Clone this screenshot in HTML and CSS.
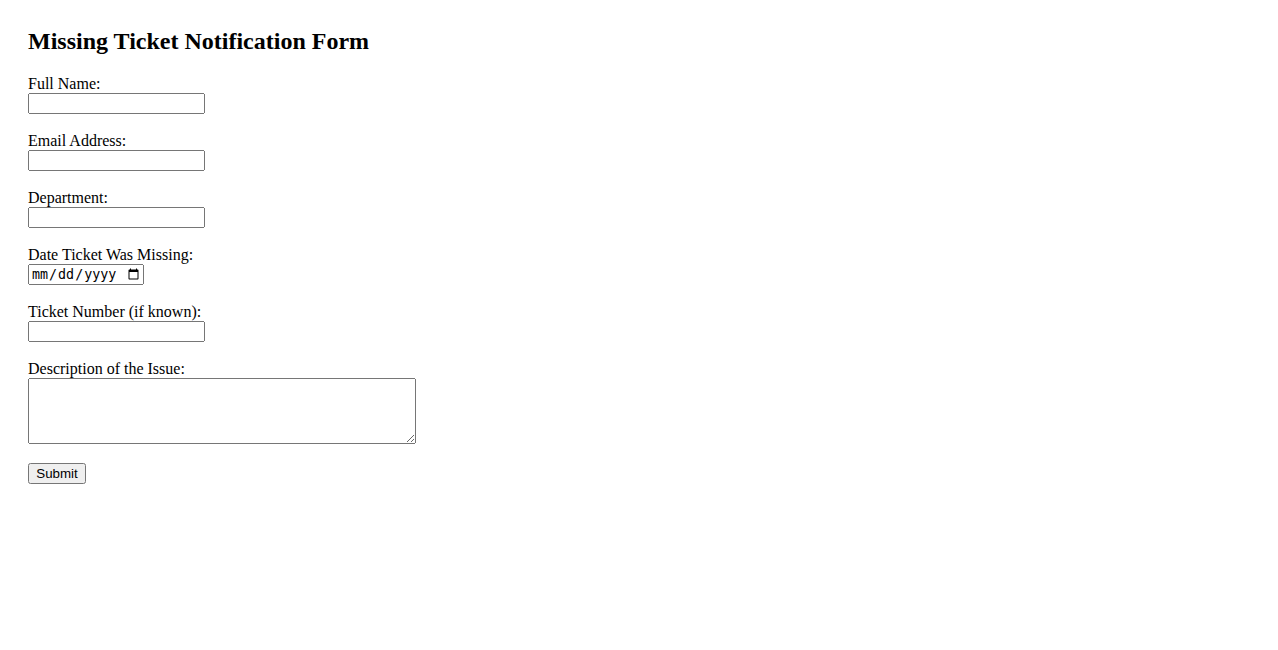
FILE: index.html
```html
<!DOCTYPE html>
<html>
<head>
<meta charset="utf-8">
<link rel="stylesheet" href="styles.css">
</head>
<body>
<h2 class="title">Missing Ticket Notification Form</h2>
<form class="form">
  <label for="name">Full Name:</label><br>
  <input type="text" id="name" class="field"><br><br>
  <label for="email">Email Address:</label><br>
  <input type="email" id="email" class="field"><br><br>
  <label for="dept">Department:</label><br>
  <input type="text" id="dept" class="field"><br><br>
  <label for="date">Date Ticket Was Missing:</label><br>
  <input type="date" id="date" class="field date"><br><br>
  <label for="num">Ticket Number (if known):</label><br>
  <input type="text" id="num" class="field"><br><br>
  <label for="desc">Description of the Issue:</label><br>
  <textarea id="desc" rows="4" cols="50" class="area"></textarea>
  <div class="actions">
    <input type="submit" value="Submit" class="btn">
  </div>
</form>
</body>
</html>
```
FILE: styles.css
```css
body {
  margin: 8px;
  padding: 20px;
  font-family: "Liberation Serif", "Times New Roman", serif;
  font-size: 16px;
  color: #000;
  background: #fff;
}
.title {
  font-size: 24px;
  margin: 0 0 20px 0;
}
.form {
  margin: 0;
}
.field, .area, .btn {
  font-size: 13.333px;
  box-sizing: border-box;
}
.field {
  width: 177px;
  height: 21px;
}
.date {
  width: 116px;
}
.area {
  display: block;
  width: 388px;
  height: 66px;
  margin: 0;
}
.actions {
  margin-top: 19px;
  line-height: 0;
}
.btn {
  width: 58px;
  height: 21px;
  margin: 0;
  font-family: "Liberation Sans", Arial, sans-serif;
}
```
